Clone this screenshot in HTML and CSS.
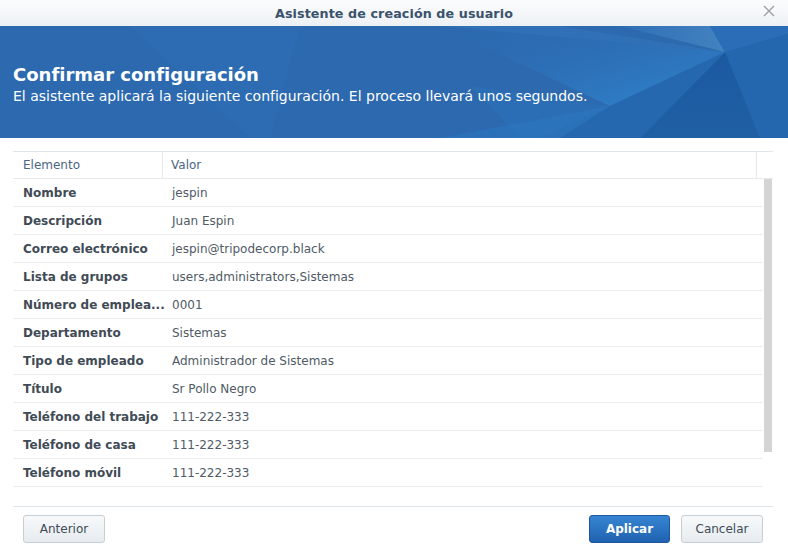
FILE: index.html
```html
<!DOCTYPE html>
<html lang="es">
<head>
<meta charset="utf-8">
<title>Asistente de creación de usuario</title>
<link rel="stylesheet" href="styles.css">
</head>
<body>
<div class="window">
  <div class="titlebar">
    <span></span>
    <span class="title">Asistente de creación de usuario</span>
    <svg class="close" width="12" height="12" viewBox="0 0 12 12"><path d="M1 1 L11 11 M11 1 L1 11" stroke="#9aa0a6" stroke-width="1.4" fill="none"/></svg>
  </div>
  <div class="banner">
    <svg class="banner-bg" width="788" height="112" viewBox="0 0 788 112" preserveAspectRatio="none">
      <defs>
        <linearGradient id="g1" x1="0" y1="0" x2="1" y2="1">
          <stop offset="0" stop-color="#2c6bb2" stop-opacity="0"/>
          <stop offset="1" stop-color="#2f86d0"/>
        </linearGradient>
        <linearGradient id="g2" x1="0" y1="0" x2="0" y2="1">
          <stop offset="0" stop-color="#1b5aa0"/>
          <stop offset="1" stop-color="#1f5fa4"/>
        </linearGradient>
        <linearGradient id="g3" x1="0" y1="0" x2="1" y2="0">
          <stop offset="0" stop-color="#2f70b6"/>
          <stop offset="1" stop-color="#4585c2"/>
        </linearGradient>
      </defs>
      <rect width="788" height="112" fill="#2c69af"/>
      <polygon points="130,0 300,0 270,112 250,112" fill="#2d6db3" opacity="0.7"/>
      <polygon points="440,0 725,26 610,80" fill="url(#g1)"/>
      <polygon points="560,0 725,26 440,0" fill="#3475bb" opacity="0.6"/>
      <polygon points="620,0 725,26 710,0" fill="url(#g3)" opacity="0.9"/>
      <polygon points="710,0 788,0 788,8 725,26" fill="#2b6db6"/>
      <polygon points="725,26 788,8 788,112 760,112" fill="#2467af"/>
      <polygon points="725,26 760,112 640,112" fill="url(#g2)"/>
      <polygon points="610,80 725,26 640,112 560,112" fill="#2668b0" opacity="0.9"/>
      <polygon points="610,80 560,112 440,112" fill="#2b73bb" opacity="0.8"/>
      <polygon points="610,80 540,112 520,112 470,60" fill="#2e78c0" opacity="0.35"/>
    </svg>
    <div class="banner-text">
      <h1>Confirmar configuración</h1>
      <p>El asistente aplicará la siguiente configuración. El proceso llevará unos segundos.</p>
    </div>
  </div>
  <div class="content">
    <div class="grid">
      <div class="head">
        <div class="hcell c1">Elemento</div>
        <div class="hcell c2">Valor</div>
        <div class="hcell c3"></div>
      </div>
      <div class="body">
        <div class="rows">
          <div class="row"><div class="k">Nombre</div><div class="v">jespin</div></div>
          <div class="row"><div class="k">Descripción</div><div class="v">Juan Espin</div></div>
          <div class="row"><div class="k">Correo electrónico</div><div class="v">jespin@tripodecorp.black</div></div>
          <div class="row"><div class="k">Lista de grupos</div><div class="v">users,administrators,Sistemas</div></div>
          <div class="row"><div class="k">Número de emplea...</div><div class="v">0001</div></div>
          <div class="row"><div class="k">Departamento</div><div class="v">Sistemas</div></div>
          <div class="row"><div class="k">Tipo de empleado</div><div class="v">Administrador de Sistemas</div></div>
          <div class="row"><div class="k">Título</div><div class="v">Sr Pollo Negro</div></div>
          <div class="row"><div class="k">Teléfono del trabajo</div><div class="v">111-222-333</div></div>
          <div class="row"><div class="k">Teléfono de casa</div><div class="v">111-222-333</div></div>
          <div class="row"><div class="k">Teléfono móvil</div><div class="v">111-222-333</div></div>
        </div>
        <div class="scrolltrack"><div class="thumb"></div></div>
      </div>
    </div>
  </div>
  <div class="footer">
    <button class="btn">Anterior</button>
    <span class="spacer"></span>
    <button class="btn primary">Aplicar</button>
    <button class="btn">Cancelar</button>
  </div>
</div>
</body>
</html>
```
FILE: styles.css
```css
html, body {
  margin: 0;
  padding: 0;
  background: #ffffff;
}
body {
  width: 788px;
  height: 548px;
  overflow: hidden;
  font-family: "DejaVu Sans", Verdana, sans-serif;
}
.window {
  display: flex;
  flex-direction: column;
  height: 548px;
}
.titlebar {
  height: 26px;
  flex: none;
  display: grid;
  grid-template-columns: 1fr auto 1fr;
  align-items: center;
  background: linear-gradient(#fbfcfd, #eef1f4);
}
.title {
  font-size: 12.7px;
  font-weight: bold;
  color: #3a526c;
  letter-spacing: 0.1px;
}
.close {
  justify-self: end;
  margin-right: 13px;
  margin-top: -4px;
}
.banner {
  height: 112px;
  flex: none;
  position: relative;
  overflow: hidden;
}
.banner-bg {
  position: absolute;
  left: 0;
  top: 0;
}
.banner-text {
  position: relative;
  padding: 38px 0 0 13px;
  color: #ffffff;
}
.banner-text h1 {
  margin: 0;
  font-size: 18px;
  line-height: 22px;
  font-weight: bold;
}
.banner-text p {
  margin: 1px 0 0;
  font-size: 14px;
  line-height: 18px;
}
.content {
  padding: 13px 15px 0 13px;
  flex: none;
}
.grid {
  border-top: 1px solid #dfe5ea;
  border-bottom: 1px solid #dfe5ea;
}
.head {
  display: grid;
  grid-template-columns: 150px 594px 16px;
  height: 26px;
  border-bottom: 1px solid #e6eaed;
}
.hcell {
  font-size: 12px;
  line-height: 26px;
  color: #4a6683;
}
.c1 { padding-left: 10px; border-right: 1px solid #e4e9ed; }
.c2 { padding-left: 8px; border-right: 1px solid #e4e9ed; }
.body {
  display: grid;
  grid-template-columns: 750px 1px 8px;
  height: 327px;
}
.rows {
  grid-column: 1;
}
.row {
  display: grid;
  grid-template-columns: 150px 1fr;
  height: 27px;
  border-bottom: 1px solid #ebedef;
  align-items: center;
}
.k {
  padding-left: 10px;
  font-size: 12px;
  font-weight: bold;
  color: #414b56;
  white-space: nowrap;
}
.v {
  padding-left: 9px;
  font-size: 12px;
  color: #4f5a66;
}
.scrolltrack {
  grid-column: 3;
}
.thumb {
  height: 273px;
  background: #d4d4d4;
}
.footer {
  display: flex;
  align-items: center;
  padding: 8px 25px 0 23px;
  gap: 11px;
}
.spacer { flex: 1; }
.btn {
  height: 28px;
  width: 82px;
  padding: 0;
  font-family: "DejaVu Sans", Verdana, sans-serif;
  font-size: 12px;
  color: #414b56;
  background: linear-gradient(#f7f9fa, #e7ebef);
  border: 1px solid #c6ced6;
  border-radius: 3px;
}
.btn.primary {
  width: 81px;
  color: #ffffff;
  font-weight: bold;
  background: linear-gradient(#3685d2, #1f62b0);
  border-color: #1b589c;
}
```
